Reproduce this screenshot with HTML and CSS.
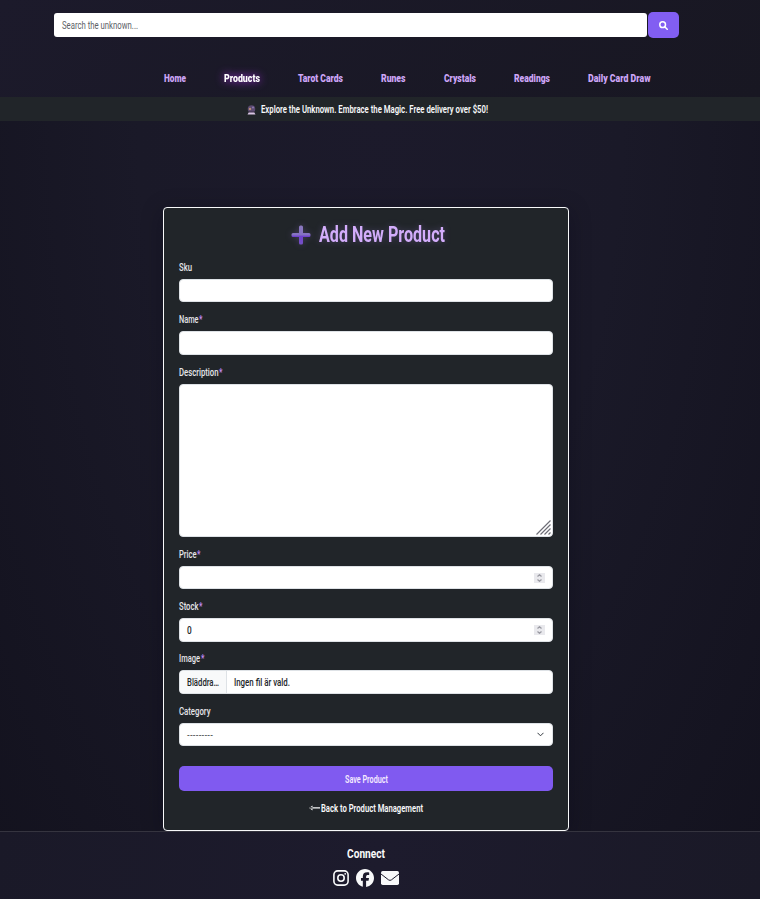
FILE: index.html
```html
<!DOCTYPE html>
<html lang="en">
<head>
<meta charset="utf-8">
<title>Add New Product</title>
<link rel="stylesheet" href="styles.css">
</head>
<body>
<header class="header">
  <form class="search">
    <div class="search-input"><svg class="t" width="77" height="12"><text y="10" textLength="76" lengthAdjust="spacingAndGlyphs">Search the unknown...</text></svg></div>
    <div class="search-btn"><svg width="9" height="9" viewBox="0 0 18 18" fill="none" stroke="currentColor" stroke-width="3"><circle cx="7.300" cy="7.300" r="5.700"/><path d="M11.500 11.500l5 5" stroke-linecap="round"/></svg></div>
  </form>
  <nav class="nav">
    <a><svg class="t" width="22" height="12"><text y="10" textLength="22" lengthAdjust="spacingAndGlyphs">Home</text></svg></a>
    <a class="active"><svg class="t" width="36" height="12"><text y="10" textLength="36" lengthAdjust="spacingAndGlyphs">Products</text></svg></a>
    <a><svg class="t" width="45" height="12"><text y="10" textLength="45" lengthAdjust="spacingAndGlyphs">Tarot Cards</text></svg></a>
    <a><svg class="t" width="24.500" height="12"><text y="10" textLength="24.500" lengthAdjust="spacingAndGlyphs">Runes</text></svg></a>
    <a><svg class="t" width="32" height="12"><text y="10" textLength="32" lengthAdjust="spacingAndGlyphs">Crystals</text></svg></a>
    <a><svg class="t" width="36" height="12"><text y="10" textLength="36" lengthAdjust="spacingAndGlyphs">Readings</text></svg></a>
    <a><svg class="t" width="62.500" height="12"><text y="10" textLength="62.500" lengthAdjust="spacingAndGlyphs">Daily Card Draw</text></svg></a>
  </nav>
</header>
<div class="banner">
  <svg class="ball" width="9" height="10" viewBox="0 0 18 20"><circle cx="9" cy="8" r="7.500" fill="#5b4a70"/><circle cx="6" cy="8" r="2.500" fill="#b58a78"/><circle cx="12" cy="5" r="2" fill="#8d7ab0"/><path d="M4 14h10l3 5H1z" fill="#d9c5e4"/><path d="M4 13h10l1 2H3z" fill="#3e3048"/></svg>
  <svg class="t" width="227" height="12"><text y="10" textLength="227" lengthAdjust="spacingAndGlyphs">Explore the Unknown. Embrace the Magic. Free delivery over $50!</text></svg>
</div>
<main class="main">
  <section class="card">
    <h1 class="title">
      <svg width="20" height="20" viewBox="0 0 20 20"><defs><linearGradient id="plus" x2="0" y2="1"><stop offset="0" stop-color="#8a78bd"/><stop offset=".5" stop-color="#8572c4"/><stop offset=".56" stop-color="#7041cf"/><stop offset="1" stop-color="#7652c4"/></linearGradient></defs><path fill="url(#plus)" d="M9.500.5h1Q12 .5 12 2v6h6q1.500 0 1.500 1.500v1q0 1.500-1.500 1.500h-6v6q0 1.500-1.500 1.500h-1Q8 19.500 8 18v-6H2Q.5 12 .5 10.500v-1Q.5 8 2 8h6V2Q8 .5 9.500.5z"/></svg>
      <svg class="t" width="126" height="24"><text y="20" textLength="126" lengthAdjust="spacingAndGlyphs">Add New Product</text></svg>
    </h1>
    <div class="field"><label><svg class="t" width="13" height="12"><text y="10" textLength="13" lengthAdjust="spacingAndGlyphs">Sku</text></svg></label><div class="control"></div></div>
    <div class="field"><label><svg class="t" width="19.500" height="12"><text y="10" textLength="19.500" lengthAdjust="spacingAndGlyphs">Name</text></svg><svg class="t req" width="3.500" height="12"><text y="10" textLength="3.500" lengthAdjust="spacingAndGlyphs">*</text></svg></label><div class="control"></div></div>
    <div class="field"><label><svg class="t" width="39.500" height="12"><text y="10" textLength="39.500" lengthAdjust="spacingAndGlyphs">Description</text></svg><svg class="t req" width="3.500" height="12"><text y="10" textLength="3.500" lengthAdjust="spacingAndGlyphs">*</text></svg></label><div class="control area"><svg width="15" height="15" viewBox="0 0 15 15" fill="none" stroke="#6e6e76" stroke-width="1.200"><path d="M.5 14.500l14-14M4.500 14.500l10-10M8.500 14.500l6-6M12.500 14.500l2-2"/></svg></div></div>
    <div class="field"><label><svg class="t" width="17.500" height="12"><text y="10" textLength="17.500" lengthAdjust="spacingAndGlyphs">Price</text></svg><svg class="t req" width="3.500" height="12"><text y="10" textLength="3.500" lengthAdjust="spacingAndGlyphs">*</text></svg></label><div class="control"><span class="spin"><svg width="5" height="8" viewBox="0 0 5 8" fill="none" stroke="#9a9aa2" stroke-width="1.200"><path d="M.5 2.500l2-1.800 2 1.800M.5 5.500l2 1.800 2-1.800"/></svg></span></div></div>
    <div class="field"><label><svg class="t" width="19.500" height="12"><text y="10" textLength="19.500" lengthAdjust="spacingAndGlyphs">Stock</text></svg><svg class="t req" width="3.500" height="12"><text y="10" textLength="3.500" lengthAdjust="spacingAndGlyphs">*</text></svg></label><div class="control"><svg class="t" width="5" height="12"><text y="10" textLength="4.700" lengthAdjust="spacingAndGlyphs">0</text></svg><span class="spin"><svg width="5" height="8" viewBox="0 0 5 8" fill="none" stroke="#9a9aa2" stroke-width="1.200"><path d="M.5 2.500l2-1.800 2 1.800M.5 5.500l2 1.800 2-1.800"/></svg></span></div></div>
    <div class="field"><label><svg class="t" width="21" height="12"><text y="10" textLength="21" lengthAdjust="spacingAndGlyphs">Image</text></svg><svg class="t req" width="3.500" height="12"><text y="10" textLength="3.500" lengthAdjust="spacingAndGlyphs">*</text></svg></label><div class="control file"><span class="browse"><svg class="t" width="32" height="12"><text y="10" textLength="32" lengthAdjust="spacingAndGlyphs">Bläddra…</text></svg></span><svg class="t" width="56" height="12"><text y="10" textLength="56" lengthAdjust="spacingAndGlyphs">Ingen fil är vald.</text></svg></div></div>
    <div class="field"><label><svg class="t" width="31.500" height="12"><text y="10" textLength="31.500" lengthAdjust="spacingAndGlyphs">Category</text></svg></label><div class="control"><svg class="t dashes" width="26" height="12"><text y="10" textLength="26">---------</text></svg><svg class="chev" width="7" height="5" viewBox="0 0 7 5" fill="none" stroke="#343a40"><path d="M.5 .8l3 3 3-3"/></svg></div></div>
    <div class="save"><svg class="t" width="43" height="12"><text y="10" textLength="43" lengthAdjust="spacingAndGlyphs">Save Product</text></svg></div>
    <div class="back">
      <svg width="11" height="6" viewBox="0 0 11 6"><path d="M3.500 .5L.2 3l3.300 2.500zM1 2.200h10v1.200H1z" fill="#f8f9fa"/></svg>
      <svg class="t" width="102" height="12"><text y="10" textLength="102" lengthAdjust="spacingAndGlyphs">Back to Product Management</text></svg>
    </div>
  </section>
</main>
<footer class="footer">
  <svg class="t connect" width="38" height="15"><text y="12" textLength="38" lengthAdjust="spacingAndGlyphs">Connect</text></svg>
  <div class="social">
    <svg width="16" height="16" viewBox="0 0 16 16" fill="none" stroke="currentColor" stroke-width="1.600"><rect x=".9" y=".9" width="14.200" height="14.200" rx="3.800"/><circle cx="8" cy="8" r="3.200"/><circle cx="12.200" cy="3.800" r=".9" fill="currentColor" stroke="none"/></svg>
    <svg width="18" height="18" viewBox="0 0 512 512" fill="currentColor"><path d="M512 256C512 114.600 397.400 0 256 0S0 114.600 0 256C0 376 82.700 476.800 194.200 504.500V334.200H141.400V256h52.800V222.300c0-87.100 39.400-127.500 125-127.500 16.200 0 44.200 3.200 55.700 6.400V172c-6-.6-16.500-1-29.600-1-42 0-58.200 15.900-58.200 57.200V256h83.600l-14.400 78.200H287V510.100C413.800 494.800 512 386.900 512 256z"/></svg>
    <svg width="18" height="14" viewBox="0 0 18 14"><rect width="18" height="14" rx="1.700" fill="currentColor"/><path d="M0 3l7.600 5.900q1.400 1 2.800 0L18 3" fill="none" stroke="#1c1a2a" stroke-width="1"/></svg>
  </div>
</footer>
</body>
</html>
```
FILE: styles.css
```css
* { box-sizing: border-box; }
body {
  margin: 0;
  height: 899px;
  display: flex;
  flex-direction: column;
  overflow: hidden;
  font-family: Roboto, "Liberation Sans", sans-serif;
  font-size: 11px;
  color: #f8f9fa;
  background: radial-gradient(ellipse at 50% 12%, #1c1a2b 0%, #1a1928 45%, #13121e 100%);
}
svg { display: block; flex: none; }
.t { overflow: visible; fill: currentColor; }
.t text { font-size: 11.3px; }
.header {
  height: 97px;
  flex: none;
  padding-top: 12px;
  background: linear-gradient(135deg, #1c1a2b, #181722);
}
.search { display: flex; align-items: center; gap: 1px; margin-left: 54px; height: 26px; }
.search-input {
  width: 593px;
  height: 24px;
  padding: 0 8px;
  display: flex;
  align-items: center;
  background: #fff;
  border-radius: 3px;
  color: #5c6066;
}
.search-btn {
  width: 31px;
  height: 26px;
  display: flex;
  align-items: center;
  justify-content: center;
  background: #825ef2;
  border-radius: 5px;
  color: #fff;
}
.nav { display: flex; gap: 38px; margin: 34px 0 0 164px; }
.nav a { color: #cda6f7; font-weight: 900; }
.nav .active { color: #fff; filter: drop-shadow(0 0 4px #a32be0); }
.banner {
  height: 24px;
  flex: none;
  display: flex;
  align-items: center;
  gap: 4.5px;
  padding-left: 247px;
  background: #212529;
  font-weight: 600;
}
.ball { position: relative; top: 1px; }
.main { height: 710px; flex: none; padding: 86px 0 0 163px; }
.card {
  width: 406px;
  height: 624px;
  padding: 14px 15px 0;
  border: 1px solid #f8f9fa;
  border-radius: 4px;
  background: #212529;
  box-shadow: 0 4px 22px rgba(8, 8, 20, .3);
}
.title {
  height: 24px;
  margin: 0 0 14.94px;
  display: flex;
  align-items: center;
  justify-content: center;
  gap: 8px;
  padding-left: 3px;
  color: #d3adfb;
  font-weight: 700;
  filter: drop-shadow(0 0 3px rgba(180, 140, 255, .25));
}
.title > svg:first-child { position: relative; top: 1px; }
.title .t text { font-size: 22.5px; }
.field { margin-bottom: 10.85px; }
.field label { display: flex; align-items: flex-start; gap: 0.5px; height: 18px; color: #e6e6ea; font-weight: 500; }
.req { color: #c58df5; }
.control {
  height: 23.45px;
  padding: 0 7px;
  display: flex;
  align-items: center;
  background: #fff;
  border: 1px solid #dee2e6;
  border-radius: 4px;
  color: #212529;
  font-weight: 500;
}
.dashes text { font-size: 8px; }
.area { height: 153.5px; align-items: flex-end; justify-content: flex-end; padding: 0 1px 1px; }
.spin {
  width: 11px;
  height: 10px;
  margin-left: auto;
  display: flex;
  align-items: center;
  justify-content: center;
  background: #e9e9ed;
}
.file { padding-left: 0; gap: 7px; overflow: hidden; }
.browse {
  height: 100%;
  width: 47px;
  padding-left: 7px;
  display: flex;
  align-items: center;
  background: #f8f9fa;
  border-right: 1px solid #dee2e6;
}
.chev { margin: 0 1px 0 auto; }
.save {
  height: 25px;
  margin-top: 20px;
  display: flex;
  align-items: center;
  justify-content: center;
  background: #805af0;
  border-radius: 5px;
  color: #f5eaff;
  font-weight: 600;
}
.back { display: flex; align-items: center; justify-content: center; gap: 1px; margin-top: 11px; font-weight: 600; }
.footer {
  height: 68px;
  flex: none;
  padding: 14px 28px 0 0;
  border-top: 1px solid #35343f;
  background: linear-gradient(100deg, #1a1928, #1d1b2d 50%, #1a1927);
  display: flex;
  flex-direction: column;
  align-items: center;
  font-weight: 700;
}
.connect text { font-size: 13px; }
.social { display: flex; align-items: center; gap: 7px; margin-top: 8px; color: #f8f9fa; }
```
